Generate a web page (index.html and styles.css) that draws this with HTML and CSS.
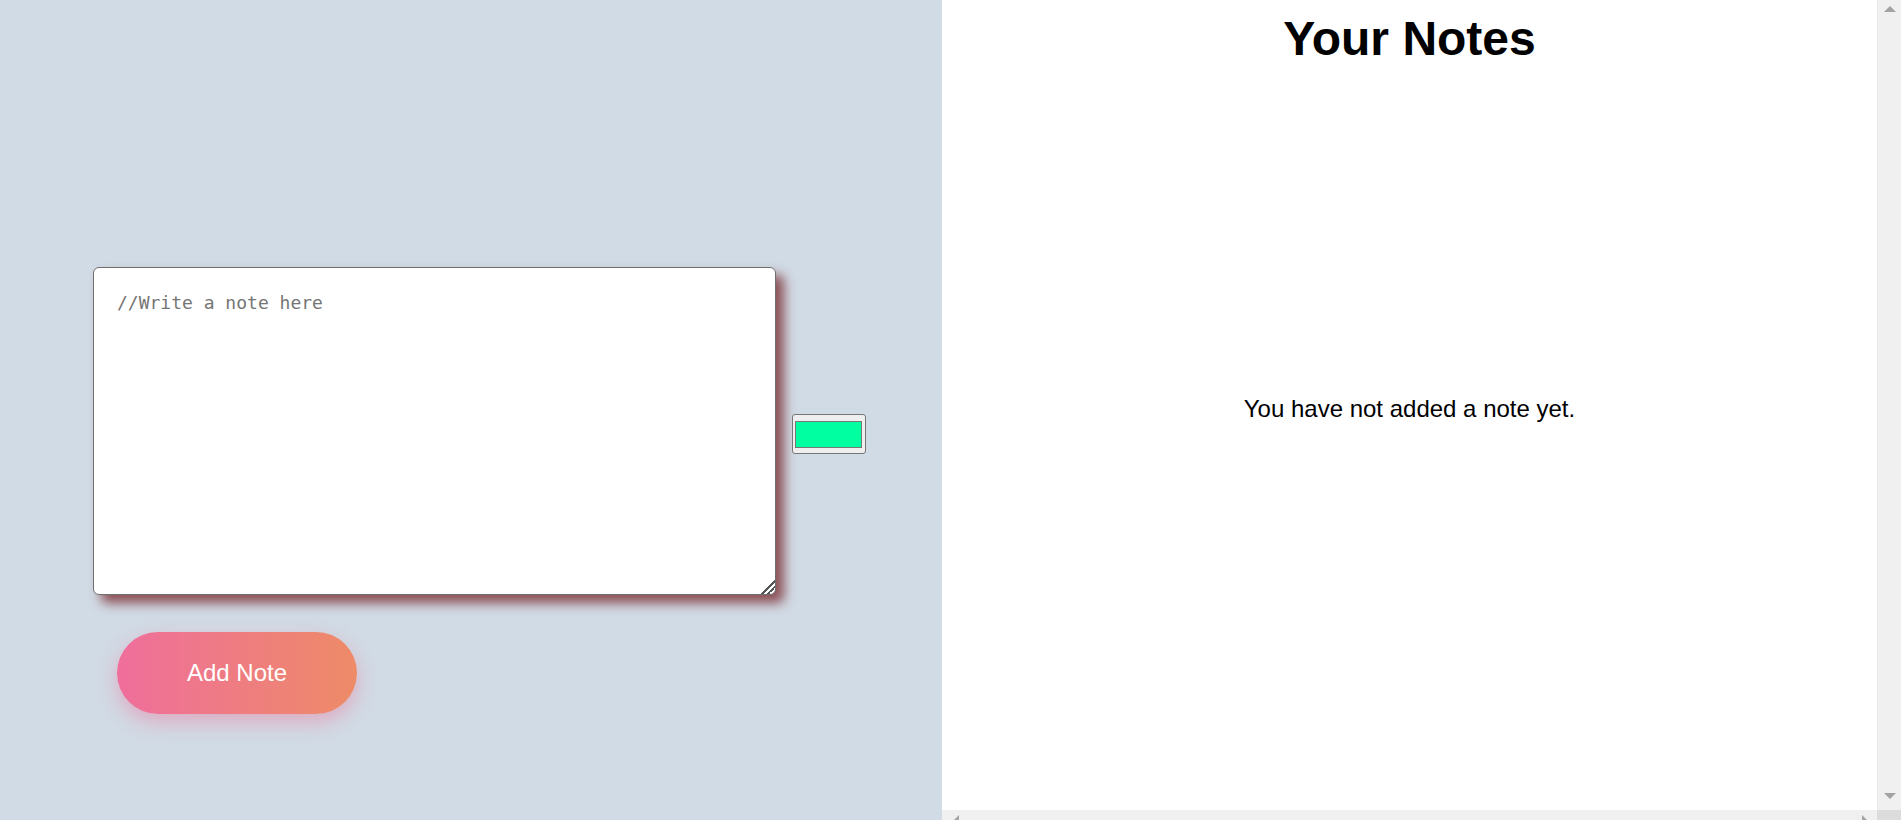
FILE: index.html
```html
<!DOCTYPE html>
<html lang="en">
<head>
<meta charset="utf-8">
<title>Notes</title>
<link rel="stylesheet" href="styles.css">
</head>
<body>
  <main class="editor">
    <div class="editor-row">
      <textarea class="note-input" placeholder="//Write a note here"></textarea>
      <input class="color-pick" type="color" value="#00ffa0">
    </div>
    <button class="add-btn" type="button">Add Note</button>
  </main>
  <section class="notes">
    <div class="notes-main">
      <div class="notes-content">
        <h1 class="notes-title">Your Notes</h1>
        <p class="notes-empty">You have not added a note yet.</p>
      </div>
      <div class="vscroll">
        <span class="arrow arrow-up"></span>
        <span class="arrow arrow-down"></span>
      </div>
    </div>
    <div class="hscroll">
      <div class="hscroll-track">
        <span class="arrow arrow-left"></span>
        <span class="arrow arrow-right"></span>
      </div>
      <div class="scroll-corner"></div>
    </div>
  </section>
</body>
</html>
```
FILE: styles.css
```css
html, body {
  margin: 0;
  padding: 0;
}
body {
  display: flex;
  height: 820px;
  overflow: hidden;
  font-family: "Liberation Sans", Arial, sans-serif;
  color: #000;
}
.editor {
  width: 942px;
  flex: 0 0 942px;
  box-sizing: border-box;
  background: #d1dbe5;
  padding: 267px 0 0 93px;
  display: flex;
  flex-direction: column;
  align-items: flex-start;
}
.editor-row {
  display: flex;
  align-items: center;
  gap: 16px;
}
.note-input {
  width: 683px;
  height: 328px;
  box-sizing: border-box;
  margin: 0;
  border: 1px solid #6f6f6f;
  border-radius: 6px;
  padding: 24px 23px 20px 23px;
  background: #fff;
  font-family: "DejaVu Sans Mono", monospace;
  font-size: 18px;
  box-shadow: 8px 8px 12px rgba(115, 30, 35, 0.75);
  outline: none;
}
.note-input::placeholder {
  color: #757575;
}
.note-input::-webkit-resizer {
  background:
    linear-gradient(135deg, transparent 52%, #555 52%, #555 60%, transparent 60%, transparent 72%, #555 72%, #555 80%, transparent 80%);
}
.color-pick {
  -webkit-appearance: none;
  appearance: none;
  width: 74px;
  height: 40px;
  box-sizing: border-box;
  margin: 5px 0 0 0;
  padding: 0;
  border: 1px solid #767676;
  border-radius: 3px;
  background: #efefef;
}
.color-pick::-webkit-color-swatch-wrapper {
  padding: 6px 3px 5px 2px;
}
.color-pick::-webkit-color-swatch {
  border: 1px solid #777;
  border-radius: 0;
}
.add-btn {
  margin: 37px 0 0 24px;
  width: 240px;
  height: 82px;
  border: none;
  border-radius: 41px;
  background: linear-gradient(to right, #ef6e9c, #ee8b67);
  color: #fff;
  font-family: "Liberation Sans", Arial, sans-serif;
  font-size: 24px;
  box-shadow: 0 8px 20px rgba(240, 110, 150, 0.45);
  cursor: pointer;
}
.notes {
  flex: 1;
  display: flex;
  flex-direction: column;
  background: #fff;
}
.notes-main {
  height: 810px;
  flex: 0 0 810px;
  display: flex;
}
.notes-content {
  flex: 1;
  display: flex;
  flex-direction: column;
  align-items: center;
}
.notes-title {
  margin: 11px 0 0 0;
  font-size: 48px;
  font-weight: bold;
  line-height: 55px;
}
.notes-empty {
  margin: 329px 0 0 0;
  font-size: 24px;
  line-height: 28px;
}
.vscroll {
  width: 24px;
  flex: 0 0 24px;
  background: #f0f0f0;
  border-left: 1px solid #e9e9e9;
  box-sizing: border-box;
  display: flex;
  flex-direction: column;
  justify-content: space-between;
  align-items: center;
  padding: 6px 0 11px 0;
}
.hscroll {
  height: 22px;
  flex: 0 0 22px;
  display: flex;
}
.hscroll-track {
  flex: 1;
  background: #f0f0f0;
  display: flex;
  justify-content: space-between;
  align-items: center;
  padding: 0 9px 0 11px;
}
.scroll-corner {
  width: 24px;
  background: #dcdcdc;
}
.arrow {
  width: 0;
  height: 0;
  display: block;
}
.arrow-up {
  border-left: 6px solid transparent;
  border-right: 6px solid transparent;
  border-bottom: 6px solid #a3a3a3;
}
.arrow-down {
  border-left: 6px solid transparent;
  border-right: 6px solid transparent;
  border-top: 6px solid #a3a3a3;
}
.arrow-left {
  border-top: 6px solid transparent;
  border-bottom: 6px solid transparent;
  border-right: 6px solid #a3a3a3;
}
.arrow-right {
  border-top: 6px solid transparent;
  border-bottom: 6px solid transparent;
  border-left: 6px solid #a3a3a3;
}
```
